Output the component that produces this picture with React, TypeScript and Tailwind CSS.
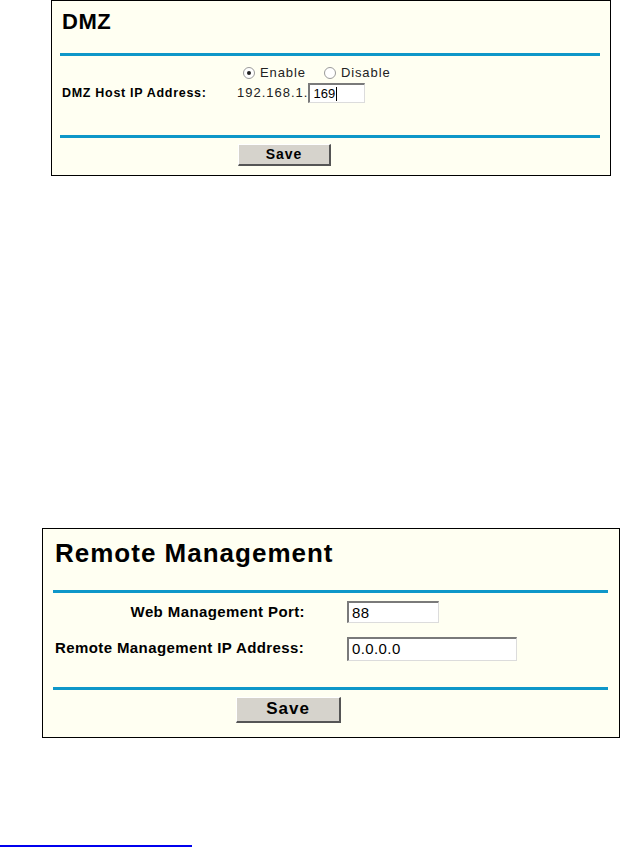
const font = { fontFamily: '"Liberation Sans", Arial, sans-serif' };

function Rule() {
  return <div className="h-[3px] bg-[#0f97c9]" />;
}

function Radio({ checked, label }: { checked?: boolean; label: string }) {
  return (
    <span className="flex items-center gap-[5px]">
      <span className="flex h-[12px] w-[12px] items-center justify-center rounded-full border border-[#9a9a9a] bg-white">
        {checked && <span className="h-[4px] w-[4px] rounded-full bg-[#222]" />}
      </span>
      <span>{label}</span>
    </span>
  );
}

function TextBox({ value, width, height, caret }: { value: string; width: string; height: string; caret?: boolean }) {
  return (
    <div
      className={`flex items-center border-t-2 border-l-2 border-r border-b border-t-[#7a7a7a] border-l-[#7a7a7a] border-r-[#dcdcdc] border-b-[#dcdcdc] bg-white pl-[3px] text-black ${width} ${height}`}
    >
      <span>{value}</span>
      {caret && <span className="ml-[1px] h-[14px] w-[1px] bg-black" />}
    </div>
  );
}

function SaveButton({ className }: { className: string }) {
  return (
    <div
      className={`flex items-center justify-center border-t border-l border-r-2 border-b-2 border-t-white border-l-white border-r-[#555] border-b-[#555] bg-[#d6d3cc] font-bold tracking-[1px] text-black ${className}`}
    >
      Save
    </div>
  );
}

export default function App() {
  return (
    <div className="flex h-[848px] w-[620px] flex-col overflow-hidden bg-white text-black" style={font}>
      {/* DMZ */}
      <div className="ml-[51px] h-[176px] w-[560px] border border-black bg-[#fffff2]">
        <div className="pl-[10px] pt-[9px] text-[22px] font-bold leading-[24px] tracking-[0.5px]">DMZ</div>
        <div className="mt-[19px] ml-[8px] mr-[10px]">
          <Rule />
        </div>
        <div className="mt-[9px] flex h-[16px] items-center pl-[191px] text-[13px] text-[#222]">
          <div className="flex gap-[18px] tracking-[0.9px]">
            <Radio checked label="Enable" />
            <Radio label="Disable" />
          </div>
        </div>
        <div className="mt-[2px] flex h-[20px] items-center text-[13px]">
          <div className="w-[185px] pl-[10px] text-[12.5px] font-bold tracking-[0.7px]">DMZ Host IP Address:</div>
          <span className="tracking-[1px] text-[#222]">192.168.1.</span>
          <TextBox value="169" width="w-[57px]" height="h-[20px]" caret />
        </div>
        <div className="mt-[32px] ml-[8px] mr-[10px]">
          <Rule />
        </div>
        <div className="mt-[6px] pl-[186px]">
          <SaveButton className="h-[22px] w-[93px] text-[14px]" />
        </div>
      </div>

      {/* Remote Management */}
      <div className="mt-[352px] ml-[42px] h-[210px] w-[578px] border border-black bg-[#fffff2]">
        <div className="pl-[12px] pt-[9px] text-[26px] font-bold leading-[30px] tracking-[1px]">Remote Management</div>
        <div className="mt-[22px] ml-[10px] mr-[11px]">
          <Rule />
        </div>
        <div className="mt-[8px] grid grid-cols-[262px_1fr] items-center gap-y-[13px] text-[15px] tracking-[0.4px]">
          <div className="text-right font-bold">Web Management Port:</div>
          <div className="pl-[42px]">
            <TextBox value="88" width="w-[92px]" height="h-[22px]" />
          </div>
          <div className="pl-[12px] font-bold">Remote Management IP Address:</div>
          <div className="pl-[42px]">
            <TextBox value="0.0.0.0" width="w-[170px]" height="h-[24px]" />
          </div>
        </div>
        <div className="mt-[26px] ml-[10px] mr-[11px]">
          <Rule />
        </div>
        <div className="mt-[7px] pl-[193px]">
          <SaveButton className="h-[26px] w-[105px] text-[17px]" />
        </div>
      </div>

      <div className="mt-[107px] h-[2px] w-[192px] bg-[#0000ee]" />
    </div>
  );
}
